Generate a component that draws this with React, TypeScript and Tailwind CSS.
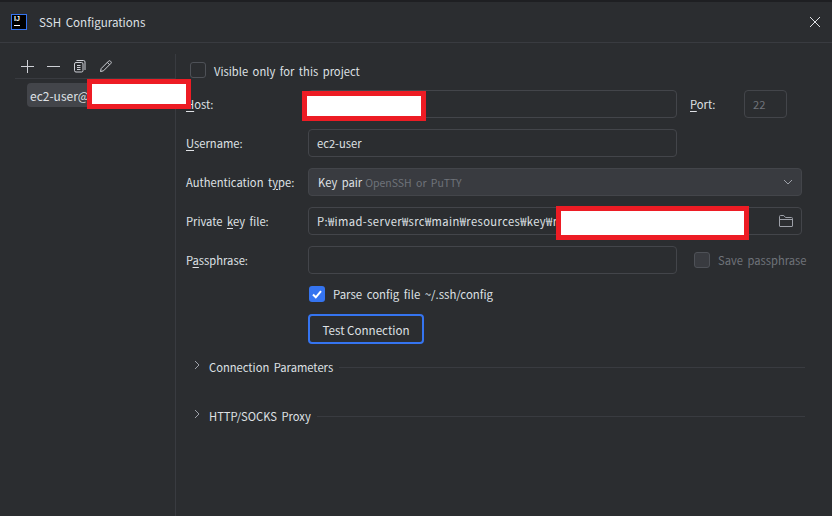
const FONT = "font-['Noto_Sans_CJK_KR','Noto_Sans',sans-serif]";

function Mn({ children }: { children: string }) {
  return <span className="underline underline-offset-2 decoration-1">{children}</span>;
}

function Redact({ className }: { className: string }) {
  return <div className={`absolute bg-white border-[5px] border-[#ed1c24] ${className}`} />;
}

function Field({ className = "", children }: { className?: string; children?: React.ReactNode }) {
  return (
    <div className={`h-7 flex items-center pl-[8px] pr-2 rounded border border-[#43454a] ${className}`}>
      {children}
    </div>
  );
}

function Row({ label, children }: { label: React.ReactNode; children: React.ReactNode }) {
  return (
    <div className="flex items-center mt-[11px]">
      <div className="w-[122px] shrink-0">{label}</div>
      {children}
    </div>
  );
}

function Section({ title }: { title: string }) {
  return (
    <div className="flex items-center h-5">
      <svg width="10" height="10" viewBox="0 0 10 10" className="ml-[6px] mr-[7px] -mt-1" fill="none" stroke="#9da0a8" strokeWidth="1">
        <path d="M3 1l4 4-4 4" />
      </svg>
      <span>{title}</span>
      <div className="flex-1 h-px bg-[#393b40] ml-[6px] mr-[27px]" />
    </div>
  );
}

export default function App() {
  return (
    <div className={`relative w-[832px] h-[516px] overflow-hidden bg-[#2b2d30] text-[#dfe1e5] text-[11.2px] [word-spacing:2px] ${FONT}`}>
      <div className="h-[2px] bg-[#1e1f22]" />
      {/* Title bar */}
      <div className="h-[41px] flex items-center border-b border-[#393b40] pl-[11px] pr-[11px]">
        <div className="w-4 h-4 bg-black border border-[#3574f0] flex flex-col px-[2px] -mt-[1px]">
          <span className="text-[7px] leading-[8px] font-bold text-white font-['Liberation_Sans',sans-serif]">IJ</span>
          <div className="w-[6px] h-px bg-white mt-[2px]" />
        </div>
        <span className="ml-3 mt-px text-[11.6px]">SSH Configurations</span>
        <svg width="12" height="12" viewBox="0 0 12 12" className="ml-auto -mt-[1px]" fill="none" stroke="#dfe1e5" strokeWidth="1">
          <path d="M1 1l10 10M11 1L1 11" />
        </svg>
      </div>

      <div className="flex pt-[11px]">
        {/* Left list */}
        <div className="w-[176px] h-[462px] shrink-0 border-r border-[#393b40]">
          <div className="ml-[15px] h-[25px] border-b border-[#393b40] flex items-center pl-[5px] gap-[11px]">
            <svg width="15" height="15" viewBox="0 0 15 15" fill="none" stroke="#ced0d6" strokeWidth="1">
              <path d="M7.5 1v13M1 7.5h13" />
            </svg>
            <svg width="15" height="15" viewBox="0 0 15 15" fill="none" stroke="#ced0d6" strokeWidth="1">
              <path d="M1 7.5h13" />
            </svg>
            <svg width="14" height="14" viewBox="0 0 14 14" className="ml-px" fill="none" stroke="#ced0d6" strokeWidth="1">
              <path d="M3.5 1.5h7a1.5 1.5 0 0 1 1.5 1.5v8" />
              <rect x="1.5" y="3.5" width="8.5" height="9.5" rx="1.5" />
              <path d="M4 6.5h3.5M4 8.5h3.5M4 10.5h3.5" />
            </svg>
            <svg width="14" height="14" viewBox="0 0 14 14" className="ml-px" fill="none" stroke="#ced0d6" strokeWidth="1">
              <path d="M1.5 12.5l.7-3L9.5 2.2a1.4 1.4 0 0 1 2 0l.3.3a1.4 1.4 0 0 1 0 2L4.5 11.8z" />
              <path d="M8.3 3.4l2.3 2.3" />
            </svg>
          </div>
          <div className="ml-[27px] mt-[4px] w-[70px] h-6 bg-[#43454a] rounded flex items-center pl-[3px] pt-[2px] whitespace-nowrap text-[12px]">
            ec2-user@
          </div>
        </div>

        {/* Form */}
        <div className="flex-1 pl-[10px]">
          <div className="flex items-center h-4 mt-[8px] pl-[4px]">
            <div className="w-4 h-4 rounded-[3px] border border-[#4e5157]" />
            <span className="ml-2 mt-[2px]">Visible only for this project</span>
          </div>

          <div className="pt-px">
            <Row label={<><Mn>H</Mn>ost:</>}>
              <Field className="w-[369px]" />
              <span className="ml-[13px] w-[54px]"><Mn>P</Mn>ort:</span>
              <Field className="w-[43px] text-[#6f737a]">22</Field>
            </Row>
          </div>
          <Row label={<><Mn>U</Mn>sername:</>}>
            <Field className="w-[369px]">ec2-user</Field>
          </Row>
          <Row label={<>Authentication t<Mn>y</Mn>pe:</>}>
            <Field className="w-[494px] bg-[#393b40]">
              <span className="ml-px">Key pair</span>
              <span className="ml-[3px] mt-[2px] text-[10.5px] text-[#6f737a]">OpenSSH or PuTTY</span>
              <svg width="12" height="12" viewBox="0 0 12 12" className="ml-auto -mr-[1px]" fill="none" stroke="#9da0a8" strokeWidth="1">
                <path d="M2 4l4 4 4-4" />
              </svg>
            </Field>
          </Row>
          <Row label={<>Private <Mn>k</Mn>ey file:</>}>
            <Field className="w-[494px]">
              <span className="whitespace-nowrap tracking-[0.4px]">P:₩imad-server₩src₩main₩resources₩key₩r</span>
              <svg width="16" height="16" viewBox="0 0 16 16" className="ml-auto -mr-[1px]" fill="none" stroke="#9da0a8" strokeWidth="1">
                <path d="M1.5 13V3.5a1 1 0 0 1 1-1h3.3l1.7 2h6a1 1 0 0 1 1 1V13a.5.5 0 0 1-.5.5H2a.5.5 0 0 1-.5-.5z" />
                <path d="M1.5 6.5h13" />
              </svg>
            </Field>
          </Row>
          <Row label={<>P<Mn>a</Mn>ssphrase:</>}>
            <Field className="w-[369px]" />
            <div className="ml-[17px] w-4 h-4 rounded-[3px] border border-[#4e5157] bg-[#393b40]" />
            <span className="ml-2 text-[#6f737a]">Save passphrase</span>
          </Row>

          <div className="ml-[123px] mt-[12px] flex items-center h-4">
            <div className="w-4 h-4 rounded-[3px] bg-[#3574f0] flex items-center justify-center">
              <svg width="12" height="12" viewBox="0 0 12 12" fill="none" stroke="#ffffff" strokeWidth="2">
                <path d="M2 6.5l2.8 2.8L10 3.2" />
              </svg>
            </div>
            <span className="ml-2 mt-px text-[11.4px]">Parse config file ~/.ssh/config</span>
          </div>

          <button className="block ml-[122px] mt-[12px] w-[116px] h-[30px] pt-[3px] rounded border-2 border-[#3574f0] text-center text-[11.6px]">
            Test Connection
          </button>

          <div className="mt-[13px]">
            <Section title="Connection Parameters" />
          </div>
          <div className="mt-[29px]">
            <Section title="HTTP/SOCKS Proxy" />
          </div>
        </div>
      </div>

      {/* Redaction boxes painted over the shot */}
      <Redact className="left-[87px] top-[79px] w-[104px] h-[30px]" />
      <Redact className="left-[302px] top-[91px] w-[124px] h-[30px]" />
      <Redact className="left-[556px] top-[206px] w-[193px] h-[34px]" />
    </div>
  );
}
